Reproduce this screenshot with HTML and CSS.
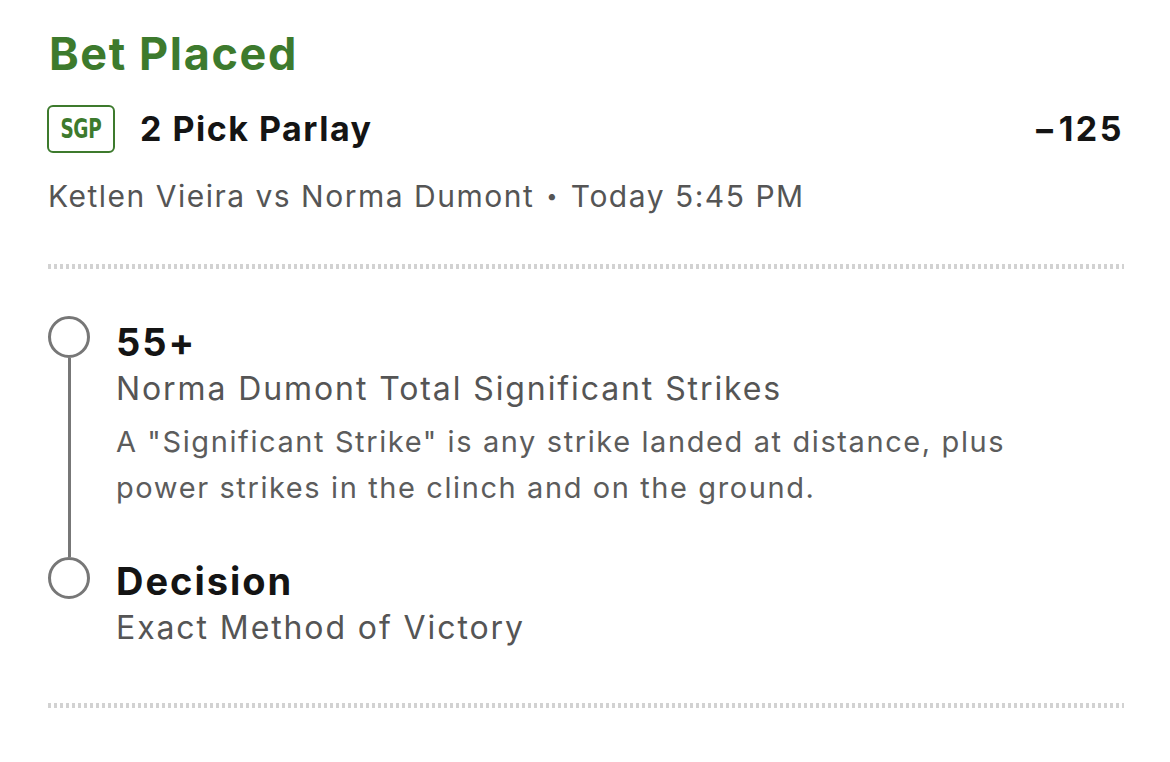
FILE: index.html
```html
<!DOCTYPE html>
<html lang="en">
<head>
<meta charset="utf-8">
<title>Bet Placed</title>
<link rel="stylesheet" href="styles.css">
</head>
<body>
<main class="page">
  <h1 class="status">Bet Placed</h1>
  <div class="bet-row">
    <span class="badge"><span class="badge-text">SGP</span></span>
    <span class="bet-title">2 Pick Parlay</span>
    <span class="odds">&minus;125</span>
  </div>
  <p class="meta">Ketlen Vieira vs Norma Dumont <span class="dot">•</span> Today 5:45 PM</p>
  <div class="divider"></div>
  <div class="legs">
    <div class="leg leg-first">
      <div class="marker"><span class="ring"></span><span class="stem"></span></div>
      <div class="leg-body">
        <div class="leg-title">55+</div>
        <div class="leg-market">Norma Dumont Total Significant Strikes</div>
        <div class="leg-desc">A "Significant Strike" is any strike landed at distance, plus power strikes in the clinch and on the ground.</div>
      </div>
    </div>
    <div class="leg leg-last">
      <div class="marker"><span class="ring"></span></div>
      <div class="leg-body">
        <div class="leg-title">Decision</div>
        <div class="leg-market">Exact Method of Victory</div>
      </div>
    </div>
  </div>
  <div class="divider divider-bottom"></div>
</main>
</body>
</html>
```

FILE: styles.css
```css
* { box-sizing: border-box; }
html, body { margin: 0; padding: 0; background: #ffffff; }
body {
  font-family: Inter, "Noto Sans", "Liberation Sans", sans-serif;
  color: #141414;
  width: 1170px;
  height: 762px;
  overflow: hidden;
}
.page {
  padding: 28px 46px 0 48px;
}
.status {
  margin: 0 0 0 1px;
  font-size: 45px;
  line-height: 52px;
  font-weight: 700;
  color: #3d7a2d;
  letter-spacing: 1.6px;
}
.bet-row {
  display: flex;
  align-items: center;
  margin-top: 25px;
  height: 48px;
}
.badge {
  width: 68px;
  height: 48px;
  border: 2.5px solid #3d7a2d;
  border-radius: 6px;
  display: flex;
  align-items: center;
  justify-content: center;
  margin-left: -1px;
}
.badge-text {
  font-family: "DejaVu Sans Condensed", "DejaVu Sans", sans-serif;
  font-weight: 700;
  font-size: 27px;
  line-height: 30px;
  letter-spacing: -0.5px;
  color: #3d7a2d;
  transform: scaleX(0.76);
  display: inline-block;
}
.bet-title {
  margin-left: 25px;
  font-size: 34px;
  font-weight: 700;
  line-height: 42px;
  letter-spacing: 1.5px;
}
.odds {
  margin-left: auto;
  font-size: 34px;
  font-weight: 700;
  line-height: 42px;
  letter-spacing: 2.5px;
  margin-right: 0;
}
.meta {
  margin: 25px 0 0;
  font-size: 30px;
  line-height: 36px;
  color: #555555;
  letter-spacing: 1.5px;
}
.meta .dot { font-size: 20px; vertical-align: 4px; padding: 0 2px; }
.divider {
  margin-top: 50px;
  height: 5px;
  background: repeating-linear-gradient(90deg, #d2d2d2 0 3px, transparent 3px 6px);
}
.legs {
  margin-top: 47px;
}
.leg {
  display: flex;
}
.marker {
  width: 42px;
  display: flex;
  flex-direction: column;
  align-items: center;
  flex: none;
}
.ring {
  width: 42px;
  height: 42px;
  border: 3px solid #777777;
  border-radius: 50%;
  flex: none;
}
.stem {
  flex: 1;
  width: 3px;
  background: #777777;
}
.leg-body {
  margin-left: 26px;
  padding-top: 5px;
}
.leg-first .leg-body { padding-bottom: 46px; }
.leg-last .leg-body { padding-top: 3px; }
.leg-title {
  font-size: 38px;
  line-height: 42px;
  font-weight: 700;
  color: #141414;
  letter-spacing: 2px;
}
.leg-market {
  margin-top: 6px;
  font-size: 32px;
  line-height: 40px;
  color: #555555;
  letter-spacing: 1.9px;
}
.leg-desc {
  margin-top: 10px;
  font-size: 29px;
  line-height: 46px;
  color: #5c5c5c;
  letter-spacing: 1.6px;
  max-width: 960px;
}
.divider-bottom {
  margin-top: 55px;
}
```
